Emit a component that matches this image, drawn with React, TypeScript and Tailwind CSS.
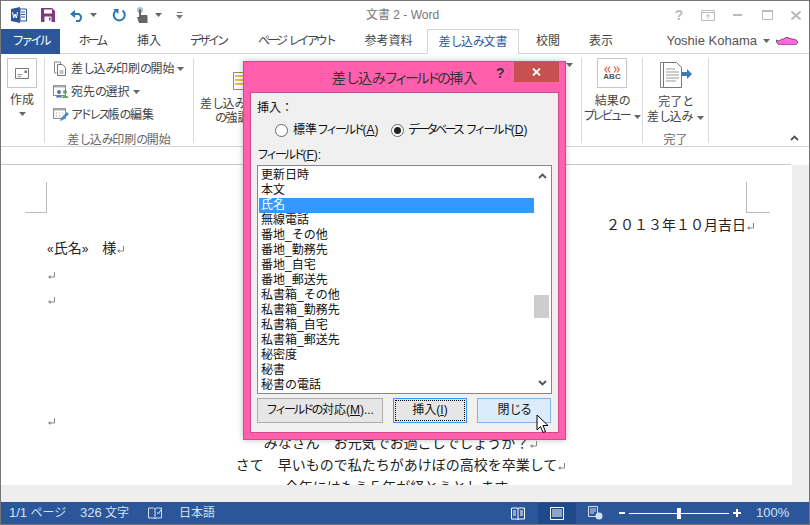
import React from "react";

const JP = "font-['Liberation_Sans','Noto_Sans_CJK_JP',sans-serif]";

// ribbon font has narrow kana, so squeeze the kana runs
const Txt = ({ children }: { children: string }) => (
  <>
    {children.split(/([\u30a0-\u30ff]+|[\u3040-\u309f]+)/).map((part, i) =>
      /^[\u30a0-\u30ff]/.test(part) ? (
        <span key={i} className="tracking-[-0.24em]">
          {part}
        </span>
      ) : /^[\u3040-\u309f]/.test(part) ? (
        <span key={i} className="tracking-[-0.13em]">
          {part}
        </span>
      ) : (
        part
      )
    )}
  </>
);

const Caret = () => (
  <svg width="7" height="4" viewBox="0 0 7 4" className="inline-block shrink-0 align-middle">
    <path d="M0 0h7L3.500 4z" fill="#666" />
  </svg>
);

const WordLogo = () => (
  <svg width="16" height="16" viewBox="0 0 16 16">
    <path d="M0 2l9-2v16l-9-2z" fill="#2b579a" />
    <path d="M9 2h6.500v12H9z" fill="#fff" stroke="#2b579a" />
    <path d="M10 5h4M10 7.500h4M10 10h4" stroke="#2b579a" />
    <path d="M1.500 5l1.200 6 1.300-4 1.300 4 1.200-6" fill="none" stroke="#fff" />
  </svg>
);

const SaveIcon = () => (
  <svg width="14" height="14" viewBox="0 0 14 14">
    <path d="M0 0h11l3 3v11H0z" fill="#80397b" />
    <path d="M3 1.500h8v4H3z" fill="#fff" />
    <path d="M3.500 8.500h7V14h-7z" fill="#fff" />
    <path d="M8 9.500h1.500v3H8z" fill="#80397b" />
  </svg>
);

const UndoIcon = () => (
  <svg width="15" height="13" viewBox="0 0 15 13">
    <path d="M3 5h6a4 4 0 0 1 0 7H6" fill="none" stroke="#2e75b6" strokeWidth="2" />
    <path d="M0 5l5-4v8z" fill="#2e75b6" />
  </svg>
);

const RedoIcon = () => (
  <svg width="14" height="14" viewBox="0 0 14 14">
    <path d="M4 2.500a5.500 5.500 0 1 0 6.500 0" fill="none" stroke="#2e75b6" strokeWidth="2" />
    <path d="M1 1h5.500v5z" fill="#2e75b6" />
  </svg>
);

const TouchIcon = () => (
  <svg width="12" height="16" viewBox="0 0 12 16">
    <circle cx="4" cy="3" r="3" fill="#a8bfd6" />
    <path d="M3 2.500h2V8h5.500a1 1 0 0 1 1 1v7H3L1 10h2z" fill="#666" />
  </svg>
);

const CustomizeIcon = () => (
  <svg width="7" height="7" viewBox="0 0 7 7">
    <path d="M1 0h5v1H1z" fill="#777" />
    <path d="M0 3h7L3.500 7z" fill="#777" />
  </svg>
);

const DocSmall = () => (
  <svg width="16" height="16" viewBox="0 0 16 16">
    <path d="M1.500 1h6v3M1.500 1v11h2" fill="none" stroke="#888" />
    <path d="M4.500 3.500h5l3 3v8h-8z" fill="#fff" stroke="#777" />
    <path d="M6.500 10h4M6.500 12h4" stroke="#888" />
  </svg>
);

const AddressIcon = () => (
  <svg width="16" height="14" viewBox="0 0 16 14">
    <path d="M.5.500h12v10H.5z" fill="#fff" stroke="#888" />
    <path d="M1 .500h11v2H1z" fill="#aaa" />
    <circle cx="6" cy="7" r="2" fill="#4a78b5" />
    <path d="M3 12.500c0-3 6-3 6 0z" fill="#4a78b5" />
    <circle cx="12" cy="7" r="2" fill="#6aa56a" />
    <path d="M9 13c0-3 6.500-3 6.500 0z" fill="#6aa56a" />
  </svg>
);

const EditListIcon = () => (
  <svg width="16" height="14" viewBox="0 0 16 14">
    <path d="M.5.500h12v10H.5z" fill="#fff" stroke="#888" />
    <path d="M1 .500h11v2H1z" fill="#aaa" />
    <path d="M3 5h1M6 5h1M9 5h1M3 8h1M6 8h1" stroke="#999" />
    <path d="M7 13l1-3 6-6 2 2-6 6z" fill="#4a8fc9" />
  </svg>
);

const EnvelopeBox = () => (
  <div className="w-[30px] h-[30px] border border-[#c6c6c6] bg-white flex items-center justify-center">
    <svg width="14" height="11" viewBox="0 0 14 11">
      <path d="M.5.500h13v10H.5z" fill="#fff" stroke="#777" />
      <path d="M9.500 2.500h2.500v2.500H9.500z" fill="#777" />
      <path d="M2.500 6.500h5M2.500 8.500h3.500" stroke="#999" />
    </svg>
  </div>
);

const PreviewBox = () => (
  <div className="w-[30px] h-[30px] border border-[#c6c6c6] bg-white flex flex-col items-center justify-center">
    <svg width="16" height="7" viewBox="0 0 16 7">
      <path
        d="M3 .500L.800 3.500 3 6.500M6 .500L3.800 3.500 6 6.500M10 .500l2.200 3-2.200 3M13 .500l2.200 3-2.200 3"
        fill="none"
        stroke="#e2603a"
        strokeWidth="1.200"
      />
    </svg>
    <span className="text-[8px] leading-[8px] font-bold text-[#555] font-['Liberation_Sans',sans-serif]">ABC</span>
  </div>
);

const FinishIcon = () => (
  <svg width="32" height="28" viewBox="0 0 32 28">
    <path d="M.5 1.500h14v2M.5 1.500v25h5" fill="none" stroke="#888" />
    <path d="M3.500 1.500h13l5 5v20h-18z" fill="#fff" stroke="#777" />
    <path d="M6 8h9M6 11h13M6 14h13M6 17h13M6 20h10" stroke="#999" />
    <path d="M22 11h5V8l5 5-5 5v-3h-5z" fill="#3f78b5" />
  </svg>
);

const Mark = () => (
  <svg width="8" height="8" viewBox="0 0 8 8" className="inline-block ml-px align-[-1px]">
    <path d="M6.500 0v5H2" fill="none" stroke="#888" />
    <path d="M0 5l2.500-2v4z" fill="#888" />
  </svg>
);

const Group = ({ children, label, className }: { children: React.ReactNode; label?: string; className: string }) => (
  <div className={`relative h-[85px] mt-[4px] border-r border-[#dadbdc] ${className}`}>
    {children}
    {label && (
      <div className="absolute bottom-[-5px] left-0 right-0 text-center text-[12px] leading-[16px] text-[#666] whitespace-nowrap">
        <Txt>{label}</Txt>
      </div>
    )}
  </div>
);

const Tab = ({ children, className }: { children: string; className: string }) => (
  <div className={`text-[12px] text-[#444] text-center leading-[25px] whitespace-nowrap ${className}`}>
    <Txt>{children}</Txt>
  </div>
);

const fields = [
  "更新日時",
  "本文",
  "氏名",
  "無線電話",
  "番地_その他",
  "番地_勤務先",
  "番地_自宅",
  "番地_郵送先",
  "私書箱_その他",
  "私書箱_勤務先",
  "私書箱_自宅",
  "私書箱_郵送先",
  "秘密度",
  "秘書",
  "秘書の電話",
];

const Radio = ({ checked }: { checked?: boolean }) => (
  <span className="w-[13px] h-[13px] rounded-full border border-[#666] bg-white flex items-center justify-center shrink-0">
    {checked && <span className="w-[7px] h-[7px] rounded-full bg-[#222]" />}
  </span>
);

const InsertFieldDialog = () => (
  <div className="absolute left-[242px] top-[60px] w-[323px] h-[379px] bg-[#ff5fad] border border-[#cf4b8d] shadow-[0_0_6px_rgba(0,0,0,0.25)] flex flex-col">
    <div className="relative h-[30px] shrink-0 text-center text-[14px] leading-[32px] text-[#333]">
      <Txt>差し込みフィールドの挿入</Txt>
      <span className="absolute left-[252px] top-[0px] text-[14px] leading-[22px] font-bold text-[#333]">?</span>
      <div className="absolute left-[270px] top-0 w-[45px] h-[20px] bg-[#c75050] flex items-center justify-center">
        <svg width="9" height="8" viewBox="0 0 9 8">
          <path d="M1 .500l7 7M8 .500l-7 7" stroke="#fff" strokeWidth="1.800" />
        </svg>
      </div>
    </div>
    <div className="mx-[6px] h-[341px] bg-[#f0f0f0] border border-[#cf4b8d] px-[6px] text-[12px] text-[#111]">
      <div className="mt-[6px] leading-[18px]">挿入：</div>
      <div className="flex items-center mt-[4px] ml-[18px] h-[18px] leading-[18px]">
        <Radio />
        <span className="ml-[5px] w-[83px] whitespace-nowrap">
          <Txt>標準フィールド</Txt>(<span className="underline">A</span>)
        </span>
        <span className="ml-[15px]">
          <Radio checked />
        </span>
        <span className="ml-[4px] whitespace-nowrap">
          <Txt>データベース フィールド</Txt>(<span className="underline">D</span>)
        </span>
      </div>
      <div className="mt-[7px] leading-[18px]">
        <Txt>フィールド</Txt>(<span className="underline">F</span>):
      </div>
      <div className="mt-px w-[295px] h-[229px] bg-white border border-[#828790] flex">
        <div className="w-[276px] pl-px pt-[2px]">
          {fields.map((f) => (
            <div
              key={f}
              className={`h-[15px] leading-[15px] pl-[2px] whitespace-nowrap ${
                f === "氏名" ? "bg-[#3399ff] text-white" : "text-[#111]"
              }`}
            >
              {f}
            </div>
          ))}
        </div>
        <div className="w-[17px] flex flex-col items-center relative">
          <svg width="9" height="6" viewBox="0 0 9 6" className="mt-[7px]">
            <path d="M1 5l3.500-3.500L8 5" fill="none" stroke="#555" strokeWidth="1.800" />
          </svg>
          <div className="absolute top-[129px] left-0 w-[15px] h-[23px] bg-[#cdcdcd]" />
          <svg width="9" height="6" viewBox="0 0 9 6" className="mt-auto mb-[7px]">
            <path d="M1 1l3.500 3.500L8 1" fill="none" stroke="#555" strokeWidth="1.800" />
          </svg>
        </div>
      </div>
      <div className="flex mt-[4px] h-[25px] leading-[23px] text-center">
        <div className="w-[126px] border border-[#adadad] bg-[#e6e6e6] whitespace-nowrap">
          <Txt>フィールドの対応</Txt>(<span className="underline">M</span>)...
        </div>
        <div className="ml-[10px] w-[74px] border border-[#3399ff] bg-[#e6e6e6] p-px">
          <div className="border border-dotted border-black h-full leading-[19px]">
            挿入(<span className="underline">I</span>)
          </div>
        </div>
        <div className="ml-[10px] w-[74px] border border-[#7eb4ea] bg-[#dcecfc]">
          <Txt>閉じる</Txt>
        </div>
      </div>
    </div>
    <svg width="15" height="21" viewBox="0 0 15 21" className="absolute left-[292px] top-[352px]">
      <path d="M1 1v15l3.500-3.500 2.500 6 2.500-1-2.500-6H12z" fill="#fff" stroke="#000" />
    </svg>
  </div>
);

export default function App() {
  return (
    <div className={`relative w-[810px] h-[525px] overflow-hidden bg-white border border-[#767676] flex flex-col ${JP}`}>
      {/* title bar */}
      <div className="h-[28px] shrink-0 flex items-center pl-[10px] relative">
        <WordLogo />
        <span className="ml-[14px]">
          <SaveIcon />
        </span>
        <span className="ml-[15px]">
          <UndoIcon />
        </span>
        <span className="ml-[5px] flex">
          <Caret />
        </span>
        <span className="ml-[15px]">
          <RedoIcon />
        </span>
        <span className="ml-[10px]">
          <TouchIcon />
        </span>
        <span className="ml-[7px] flex">
          <Caret />
        </span>
        <span className="ml-[14px]">
          <CustomizeIcon />
        </span>
        <span className="absolute left-[365px] top-[5px] text-[12px] leading-[18px] text-[#777]">文書 2 - Word</span>
        <div className="absolute right-[8px] top-[7px] flex items-center text-[#bbb]">
          <span className="w-[16px] text-center text-[14px] leading-[14px] font-bold">?</span>
          <svg width="14" height="11" viewBox="0 0 14 11" className="ml-[14px]">
            <path d="M.5.500h13v10H.5zM.5 2.500h13M7 9V4.500M5 6.500l2-2 2 2" fill="none" stroke="#bbb" />
          </svg>
          <span className="ml-[18px] w-[9px] h-[2px] bg-[#bbb]" />
          <svg width="11" height="10" viewBox="0 0 11 10" className="ml-[20px]">
            <path d="M.5.500h10v9H.5z" fill="none" stroke="#bbb" />
            <path d="M0 0h11v2H0z" fill="#bbb" />
          </svg>
          <svg width="10" height="9" viewBox="0 0 10 9" className="ml-[18px]">
            <path d="M.5.500l9 8M9.500.500l-9 8" stroke="#bbb" strokeWidth="2" />
          </svg>
        </div>
      </div>

      {/* tabs */}
      <div className="h-[25px] shrink-0 flex border-b border-[#d4d4d4] relative">
        <div className="w-[59px] h-[25px] bg-[#2b579a] text-white text-[12px] text-center leading-[25px]">
          <Txt>ファイル</Txt>
        </div>
        <Tab className="w-[64px]">ホーム</Tab>
        <Tab className="w-[50px]">挿入</Tab>
        <Tab className="w-[68px]">デザイン</Tab>
        <Tab className="w-[108px]">ページ レイアウト</Tab>
        <Tab className="w-[77px]">参考資料</Tab>
        <div className="w-[92px] h-[25px] bg-white border border-b-0 border-[#d4d4d4] text-[#2b579a] text-[12px] text-center leading-[24px] z-10">
          <Txt>差し込み文書</Txt>
        </div>
        <Tab className="w-[58px]">校閲</Tab>
        <Tab className="w-[48px]">表示</Tab>
        <div className="ml-auto mr-[11px] flex items-center h-[24px] text-[12px] text-[#555]">
          <span className="font-['Liberation_Sans',sans-serif] text-[13px]">Yoshie Kohama</span>
          <span className="ml-[6px] flex">
            <Caret />
          </span>
          <svg width="22" height="8" viewBox="0 0 22 8" className="ml-[6px]">
            <path d="M0 3l3 1 3-2h2l2-2 3 1 3 1c3 0 5 1 6 3 0 1-2 3-4 3H3L1 6z" fill="#ff66e0" stroke="#222" strokeWidth=".6" />
          </svg>
        </div>
      </div>

      {/* ribbon */}
      <div className="h-[93px] shrink-0 flex border-b border-[#d4d4d4] text-[12px] text-[#444] relative">
        <Group className="w-[44px]">
          <div className="flex flex-col items-center pr-px">
            <EnvelopeBox />
            <span className="mt-[4px] leading-[16px]">作成</span>
            <span className="mt-[4px] flex">
              <Caret />
            </span>
          </div>
        </Group>
        <Group className="w-[149px]" label="差し込み印刷の開始">
          <div className="pl-[8px] pt-[3px] flex flex-col gap-[7px]">
            <div className="flex items-center h-[16px] whitespace-nowrap">
              <DocSmall />
              <span className="ml-[2px]">
                <Txt>差し込み印刷の開始</Txt>
              </span>
              <span className="ml-[3px] flex">
                <Caret />
              </span>
            </div>
            <div className="flex items-center h-[16px] whitespace-nowrap">
              <AddressIcon />
              <span className="ml-[2px]">
                <Txt>宛先の選択</Txt>
              </span>
              <span className="ml-[4px] flex">
                <Caret />
              </span>
            </div>
            <div className="flex items-center h-[16px] whitespace-nowrap">
              <EditListIcon />
              <span className="ml-[2px]">
                <Txt>アドレス帳の編集</Txt>
              </span>
            </div>
          </div>
        </Group>
        <Group className="w-[388px]">
          <div className="absolute left-[6px] top-[39px] leading-[14px] whitespace-nowrap">
            <div>
              <Txt>差し込み</Txt>
            </div>
            <div className="ml-[15px]">
              <Txt>の強調</Txt>
            </div>
          </div>
          <svg width="12" height="18" viewBox="0 0 12 18" className="absolute left-[39px] top-[14px]">
            <path d="M.5.500h11v17H.5z" fill="#fff" stroke="#888" />
            <path d="M2 3h8v2H2zM2 7h8v2H2zM2 11h8v2H2z" fill="#f2b84b" />
          </svg>
          <span className="absolute right-[8px] top-[5px] flex">
            <Caret />
          </span>
        </Group>
        <Group className="w-[61px]">
          <div className="flex flex-col items-center">
            <PreviewBox />
            <span className="mt-[6px] leading-[15px]">
              <Txt>結果の</Txt>
            </span>
            <span className="leading-[15px] whitespace-nowrap">
              <Txt>プレビュー</Txt>
              <span className="ml-[5px]">
                <Caret />
              </span>
            </span>
          </div>
        </Group>
        <Group className="w-[66px]" label="完了">
          <div className="flex flex-col items-center pt-[3px]">
            <FinishIcon />
            <span className="mt-[6px] leading-[15px]">
              <Txt>完了と</Txt>
            </span>
            <span className="leading-[15px] whitespace-nowrap">
              <Txt>差し込み</Txt>
              <span className="ml-[5px]">
                <Caret />
              </span>
            </span>
          </div>
        </Group>
        <svg width="9" height="6" viewBox="0 0 9 6" className="absolute right-[10px] bottom-[5px]">
          <path d="M1 5l3.500-3.500L8 5" fill="none" stroke="#555" strokeWidth="1.800" />
        </svg>
      </div>

      {/* ruler strip */}
      <div className="h-[18px] shrink-0 bg-white border-b border-[#c8c8c8] mr-[18px]" />

      {/* document */}
      <div className="flex-1 min-h-0 bg-[#eeeeee] pb-[17px] pr-[17px]">
        <div className="relative h-full bg-white overflow-hidden text-[14px] text-[#222]">
          <div className="absolute left-[24px] top-[17px] w-[22px] h-[31px] border-r border-b border-[#bbb]" />
          <div className="absolute left-[745px] top-[17px] w-[24px] h-[31px] border-l border-b border-[#bbb]" />
          <div className="pt-[50px] pl-[46px] pr-[37px] leading-[20px]">
            <div className="text-right">
              ２０１３年１０月吉日
              <Mark />
            </div>
            <div className="mt-[3px] whitespace-nowrap">
              <span className="text-[12px]">«</span>氏名<span className="text-[12px]">»</span>　様
              <Mark />
            </div>
            <div className="mt-[5px]">
              <Mark />
            </div>
            <div className="mt-[5px]">
              <Mark />
            </div>
            <div className="mt-[101px]">
              <Mark />
            </div>
            <div className="mt-[3px] text-center">
              みなさん　お元気でお過ごしでしょうか？
              <Mark />
            </div>
            <div className="mt-[2px] text-center">
              さて　早いもので私たちがあけぼの高校を卒業して
              <Mark />
            </div>
            <div className="mt-[2px] text-center">
              今年にはもう５年が経とうとします
              <Mark />
            </div>
          </div>
        </div>
      </div>

      {/* status bar */}
      <div className="h-[22px] shrink-0 bg-[#2b579a] text-[12px] text-[#d5e1f2] flex items-center relative">
        <span className="ml-[8px] w-[71px] whitespace-nowrap">
          <span className="text-[13px]">1/1</span> ページ
        </span>
        <span className="w-[68px] whitespace-nowrap">
          <span className="text-[13px]">326</span> 文字
        </span>
        <svg width="14" height="13" viewBox="0 0 14 13">
          <path d="M.5 1h5l1.500 1 1.500-1h5v10H8L7 12l-1-1H.5zM7 2v9M9 5l1.500 2L13 2.500" fill="none" stroke="#d5e1f2" />
        </svg>
        <span className="ml-[17px] whitespace-nowrap">日本語</span>
        <div className="absolute left-[510px] top-[3px] flex items-center h-[16px]">
          <svg width="14" height="13" viewBox="0 0 14 13">
            <path d="M.5 1h6l.5 1 .5-1h6v11h-6L7 13l-.5-1h-6z" fill="none" stroke="#fff" />
            <path d="M2 4h3M2 6h3M2 8h3M9 4h3M9 6h3M9 8h3M7 2v10" stroke="#fff" />
          </svg>
        </div>
        <div className="absolute left-[537px] top-px w-[38px] h-[21px] bg-[#1e4a8a] flex items-center justify-center">
          <svg width="14" height="13" viewBox="0 0 14 13">
            <path d="M.5.500h13v12H.5z" fill="none" stroke="#fff" />
            <path d="M2 3h10M2 5h10M2 7h10M2 9h10" stroke="#fff" />
          </svg>
        </div>
        <div className="absolute left-[587px] top-[4px]">
          <svg width="15" height="14" viewBox="0 0 15 14">
            <path d="M.5.500h9v10h-9zM2 3h6M2 5h6M2 7h4" fill="none" stroke="#d5e1f2" />
            <circle cx="11" cy="10" r="3.500" fill="#d5e1f2" />
          </svg>
        </div>
        <div className="absolute left-[618px] top-0 h-[22px] flex items-center text-white">
          <span className="w-[6px] h-[2px] bg-white" />
          <div className="relative ml-[4px] w-[100px] h-px bg-white">
            <span className="absolute left-[48px] top-[-5px] w-[4px] h-[11px] bg-white" />
          </div>
          <svg width="8" height="8" viewBox="0 0 8 8" className="ml-[4px]">
            <path d="M3 0h2v3h3v2H5v3H3V5H0V3h3z" fill="#fff" />
          </svg>
          <span className="ml-[15px] text-[13px] whitespace-nowrap font-['Liberation_Sans',sans-serif] text-[#d5e1f2]">100%</span>
        </div>
      </div>

      <InsertFieldDialog />
    </div>
  );
}
